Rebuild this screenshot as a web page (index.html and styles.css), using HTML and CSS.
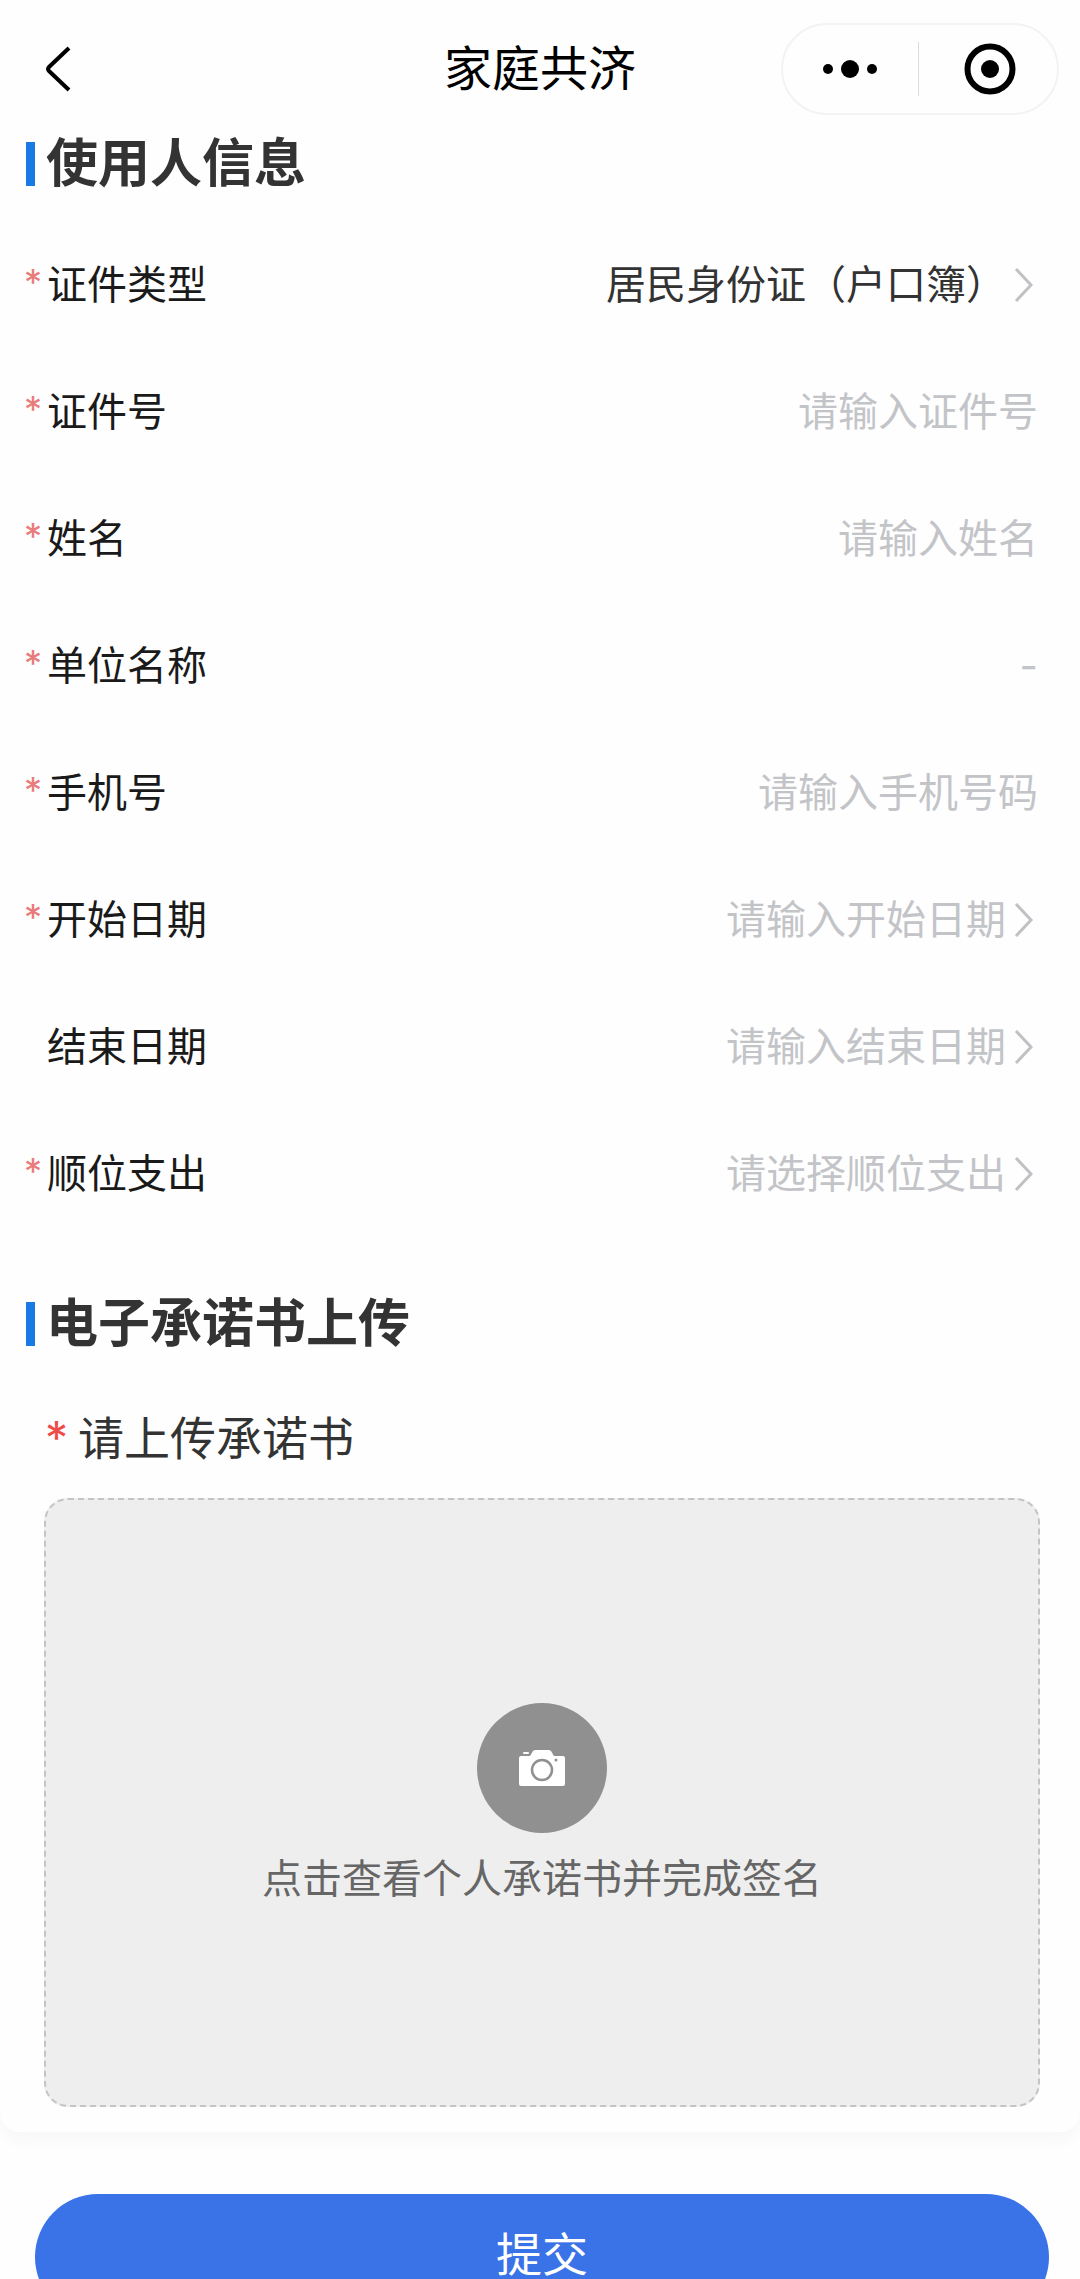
FILE: index.html
```html
<!DOCTYPE html>
<html lang="zh-CN">
<head>
    <meta charset="UTF-8">
    <meta name="viewport" content="width=device-width, initial-scale=1.0">
    <title>家庭共济</title>
    <link rel="stylesheet" href="styles.css">
</head>
<body>
    <header class="navbar">
        <button type="button" class="back" aria-label="返回">
            <svg width="28" height="48" viewBox="0 0 28 48"><path d="M25 3 L5 22 Q3 24 5 26 L25 45" fill="none" stroke="#000" stroke-width="4"/></svg>
        </button>
        <h1>家庭共济</h1>
        <div class="capsule">
            <button type="button" aria-label="更多">
                <svg width="56" height="20" viewBox="0 0 56 20"><circle cx="6" cy="10" r="5"/><circle cx="28" cy="10" r="9"/><circle cx="50" cy="10" r="5"/></svg>
            </button>
            <button type="button" class="close" aria-label="关闭">
                <svg width="52" height="52" viewBox="0 0 52 52"><circle cx="26" cy="26" r="22.5" fill="none" stroke="#000" stroke-width="6"/><circle cx="26" cy="26" r="9"/></svg>
            </button>
        </div>
    </header>

    <form>
        <div class="card">
            <h2>使用人信息</h2>
            <div class="row required">
                <label for="id-type">证件类型</label>
                <select id="id-type" name="id-type">
                    <option>居民身份证（户口簿）</option>
                </select>
                <svg class="arrow" width="20" height="36" viewBox="0 0 20 36"><path d="M2 2 L17 18 L2 34"/></svg>
            </div>
            <div class="row required">
                <label for="id-number">证件号</label>
                <input type="text" id="id-number" name="id-number" placeholder="请输入证件号">
            </div>
            <div class="row required">
                <label for="user-name">姓名</label>
                <input type="text" id="user-name" name="user-name" placeholder="请输入姓名">
            </div>
            <div class="row required">
                <label for="company">单位名称</label>
                <input type="text" id="company" name="company" placeholder="-">
            </div>
            <div class="row required">
                <label for="phone">手机号</label>
                <input type="tel" id="phone" name="phone" placeholder="请输入手机号码">
            </div>
            <div class="row required">
                <label for="start-date">开始日期</label>
                <input type="text" id="start-date" name="start-date" placeholder="请输入开始日期" readonly>
                <svg class="arrow" width="20" height="36" viewBox="0 0 20 36"><path d="M2 2 L17 18 L2 34"/></svg>
            </div>
            <div class="row">
                <label for="end-date">结束日期</label>
                <input type="text" id="end-date" name="end-date" placeholder="请输入结束日期" readonly>
                <svg class="arrow" width="20" height="36" viewBox="0 0 20 36"><path d="M2 2 L17 18 L2 34"/></svg>
            </div>
            <div class="row required">
                <label for="pay-order">顺位支出</label>
                <select id="pay-order" name="pay-order" class="empty">
                    <option value="">请选择顺位支出</option>
                </select>
                <svg class="arrow" width="20" height="36" viewBox="0 0 20 36"><path d="M2 2 L17 18 L2 34"/></svg>
            </div>

            <h2 class="upload-title">电子承诺书上传</h2>
            <div class="upload">
                <p id="upload-label"><span class="star">*</span>请上传承诺书</p>
                <button type="button" class="upload-box" aria-describedby="upload-label">
                    <span class="camera">
                        <svg width="48" height="38" viewBox="0 0 48 38">
                            <path fill="#fff" d="M3 7 H12 L15 2 Q16 1 18 1 H30 Q32 1 33 2 L36 7 H45 Q47 7 47 9 V35 Q47 37 45 37 H3 Q1 37 1 35 V9 Q1 7 3 7 Z"/>
                            <rect x="5" y="3" width="6" height="2" rx="1" fill="#fff"/>
                            <circle cx="24" cy="21" r="10" fill="#fff" stroke="#909090" stroke-width="2.5"/>
                            <circle cx="38" cy="11" r="1.5" fill="#909090"/>
                        </svg>
                    </span>
                    <span>点击查看个人承诺书并完成签名</span>
                </button>
            </div>
        </div>
        <button type="submit" class="submit">提交</button>
    </form>
</body>
</html>
```
FILE: styles.css
```css
* {
    box-sizing: border-box;
}

body {
    margin: 0;
    height: 100vh;
    overflow: hidden;
    background-color: #fefefe;
    color: #1a1a1a;
    font-family: Inter, "Noto Sans CJK SC", sans-serif;
    font-size: 40px;
}

button, input, select {
    margin: 0;
    padding: 0;
    border: none;
    background: none;
    color: inherit;
    font: inherit;
}

svg {
    display: block;
    flex-shrink: 0;
}

/* top bar */
.navbar {
    display: grid;
    grid-template-columns: 1fr auto 1fr;
    align-items: center;
    height: 138px;
    padding: 0 21px;
}

.navbar h1 {
    margin: 0;
    color: #000;
    font-size: 48px;
    font-weight: 400;
    line-height: 60px;
}

.back {
    justify-self: start;
    margin-left: 23px;
}

.capsule {
    justify-self: end;
    display: flex;
    align-items: center;
    width: 278px;
    height: 92px;
    border: 2px solid #f3f3f3;
    border-radius: 46px;
}

.capsule button {
    display: flex;
    flex: 1;
    align-items: center;
    justify-content: center;
    height: 54px;
}

.capsule .close {
    padding-left: 4px;
    border-left: 1px solid #dcdcdc;
}

/* card */
.card {
    padding-bottom: 25px;
    border-radius: 0 0 20px 20px;
    background-color: #fefefe;
    box-shadow: 0 8px 16px rgba(0, 0, 0, 0.03);
}

h2 {
    display: flex;
    align-items: center;
    gap: 11px;
    margin: 0 0 31px;
    padding-left: 26px;
    color: #333;
    font-size: 52px;
    font-weight: 700;
    line-height: 52px;
}

h2::before {
    content: "";
    width: 9px;
    height: 44px;
    background-color: #187ae2;
}

.row {
    display: flex;
    align-items: center;
    height: 127px;
    padding: 0 42px 0 24px;
}

.row::before {
    content: "";
    width: 23px;
    padding-bottom: 6px;
    color: #e97b7b;
    font-size: 36px;
    line-height: 60px;
}

.row.required::before {
    content: "*";
}

.row label {
    line-height: 60px;
}

.row input, .row select {
    flex: 1;
    min-width: 0;
    height: 60px;
    line-height: 60px;
    text-align: right;
    text-align-last: right;
    appearance: none;
    outline: none;
}

.row select {
    color: #333;
}

.row input::placeholder, .row select.empty {
    color: #c3c4c8;
    opacity: 1;
}

.arrow {
    margin-left: 8px;
    margin-right: 4px;
    fill: none;
    stroke: #c0c1c4;
    stroke-width: 3;
}

/* upload */
.upload-title {
    margin-top: 61px;
}

.upload {
    padding: 27px 40px 0 44px;
}

.upload p {
    display: flex;
    gap: 10px;
    margin: 0 0 30px 1px;
    color: #333;
    font-size: 46px;
    line-height: 60px;
}

.star {
    color: #ee4a4a;
}

.upload-box {
    display: flex;
    flex-direction: column;
    align-items: center;
    justify-content: center;
    gap: 16px;
    width: 100%;
    height: 609px;
    padding-top: 6px;
    border: 2px dashed #c4c4c4;
    border-radius: 24px;
    background-color: #eee;
    color: #666;
    line-height: 60px;
}

.camera {
    display: flex;
    align-items: center;
    justify-content: center;
    width: 130px;
    height: 130px;
    border-radius: 50%;
    background-color: #909090;
}

.submit {
    display: block;
    width: calc(100% - 66px);
    height: 126px;
    margin: 62px 31px 40px 35px;
    padding-bottom: 6px;
    border-radius: 63px;
    background-color: #3a72e8;
    color: #fff;
    font-size: 46px;
    line-height: 60px;
}
```
